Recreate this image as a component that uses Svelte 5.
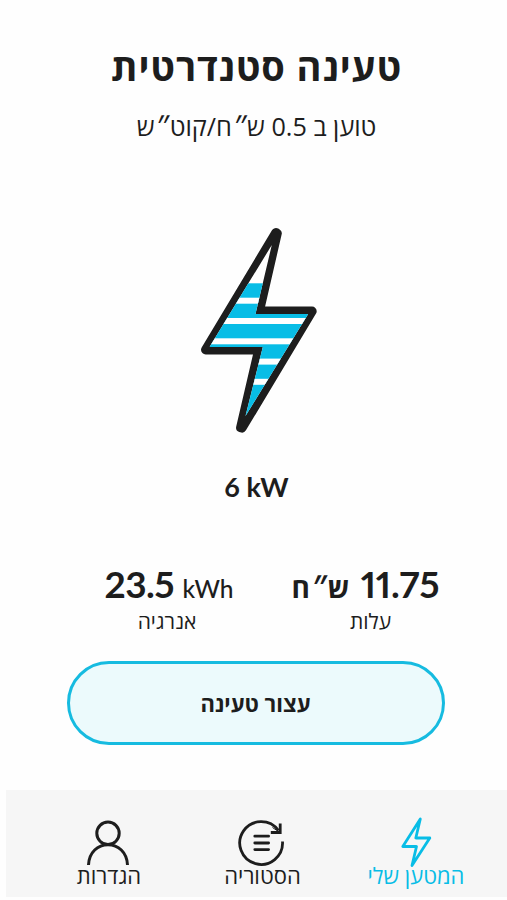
<script lang="ts">
  const rate = 0.5;
  const power = 6;
  const energy = 23.5;
  const cost = 11.75;

  // y positions of the gaps in the charge fill
  const gaps = [82.7, 103, 123.3, 143.6, 163.8];
  const outline = "M75.5 17.7 L76.6 18.3 L58.7 96.2 H111.5 L41.4 212.9 L40.3 212.5 L58.4 134.8 H5.2 Z";
  const inside = "M71.3 30 L55 99 H107.7 L45 201 L62.3 132 H9 Z";
</script>

<div class="screen" dir="rtl">
  <h1>טעינה סטנדרטית</h1>
  <p class="rate">טוען ב {rate} ש<i>״</i>ח/קוט<i>״</i>ש</p>

  <svg class="bolt" width="120" height="220" viewBox="0 0 120 220">
    <defs>
      <clipPath id="bolt-inside">
        <path d={inside} />
      </clipPath>
    </defs>
    <path d={outline} fill="#1d1d1d" stroke="#1d1d1d" stroke-width="9.4" stroke-linejoin="round" />
    <g clip-path="url(#bolt-inside)">
      <rect width="120" height="220" fill="#fff" />
      <rect y="68.3" width="120" height="150" fill="#08bde6" />
      {#each gaps as y}
        <rect {y} width="120" height="6" fill="#fff" />
      {/each}
    </g>
  </svg>

  <div class="power" dir="ltr">{power} kW</div>

  <div class="stats">
    <div class="stat cost">
      <div class="value"><b>{cost}</b><span class="currency">ש<i>״</i>ח</span></div>
      <div class="label">עלות</div>
    </div>
    <div class="stat energy">
      <div class="value" dir="ltr"><b>{energy}</b><span class="unit">kWh</span></div>
      <div class="label">אנרגיה</div>
    </div>
  </div>

  <button>עצור טעינה</button>

  <nav>
    <div class="tab active">
      <svg width="50" height="50" viewBox="0 0 50 50" fill="none" stroke="currentColor" stroke-width="2.8" stroke-linejoin="round">
        <path d="M29.3 5 L24.8 24 H38.8 L21 51.5 L25.5 32.5 H11.8 Z" />
      </svg>
      <span>המטען שלי</span>
    </div>
    <div class="tab history">
      <svg width="50" height="50" viewBox="0 0 50 50" fill="none" stroke="currentColor" stroke-width="2.8">
        <path d="M44.5 27.5 A21.4 21.4 0 1 1 40.5 16.5" />
        <path d="M42.2 9.5 V18.5 H32.8" />
        <path d="M34.5 13.5 L42 18.5" stroke-width="1" />
        <path d="M16.8 22.2 H30.6 M16.8 29 H30.6 M16.8 35.6 H30.6" stroke-linecap="round" />
      </svg>
      <span>הסטוריה</span>
    </div>
    <div class="tab settings">
      <svg width="50" height="50" viewBox="0 0 50 50" fill="none" stroke="currentColor" stroke-width="3">
        <circle cx="24" cy="19.3" r="11.2" />
        <path d="M4.5 51 C5 38 14 30.7 24 30.7 S43 38 43.5 51" />
      </svg>
      <span>הגדרות</span>
    </div>
  </nav>
</div>

<style>
  :global(body) {
    background: #fefefe;
  }
  .screen {
    display: flex;
    flex-direction: column;
    align-items: center;
    box-sizing: border-box;
    width: 507px;
    height: 900px;
    padding: 39px 0 3px 6px;
    color: #1d1d1d;
    font-family: "Open Sans", "Noto Sans", "DejaVu Sans", sans-serif;
    white-space: nowrap;
    overflow: hidden;
  }
  h1 {
    height: 56px;
    margin: 0;
    font-size: 38px;
    font-weight: 700;
    letter-spacing: 0.9px;
    line-height: 54px;
  }
  i {
    font-family: "Liberation Sans", sans-serif;
    line-height: 1;
  }
  .rate {
    height: 40px;
    margin: 11px 0 0;
    font-size: 25.2px;
    line-height: 40px;
  }
  .bolt {
    flex: none;
    margin: 69px 0 0;
    transform: translateX(3.5px);
  }
  .power {
    height: 40px;
    margin-top: 32px;
    font-family: Lato, sans-serif;
    font-size: 27px;
    font-weight: 700;
    line-height: 40px;
  }
  .stats {
    display: flex;
    gap: 58px;
    height: 76px;
    margin: 55px -31px 0 0;
  }
  .stat {
    text-align: center;
  }
  .value {
    display: flex;
    align-items: baseline;
    justify-content: space-between;
    height: 45px;
    line-height: 44px;
  }
  .value b {
    font-family: Lato, sans-serif;
    font-size: 37px;
    font-weight: 700;
    font-feature-settings: "pnum";
  }
  .cost {
    width: 148px;
  }
  .cost .label {
    padding-left: 10px;
  }
  .cost b {
    letter-spacing: -0.1px;
  }
  .energy {
    width: 129px;
  }
  .energy b {
    letter-spacing: -0.5px;
  }
  .energy .label {
    padding-right: 4px;
  }
  .cost .label {
    padding: 0 0 0 0;
    margin-right: -10px;
  }
  .currency {
    font-size: 28px;
    font-weight: 700;
  }
  .unit {
    font-family: Lato, sans-serif;
    font-size: 24.5px;
    font-weight: 500;
  }
  .label {
    font-size: 21px;
    line-height: 28px;
  }
  button {
    flex: none;
    width: 378px;
    height: 84px;
    margin: 23px 2px 0 0;
    padding: 0;
    border: 3px solid #16bbe0;
    border-radius: 42px;
    background: #ecfafc;
    color: #1d1d1d;
    font-family: inherit;
    font-size: 22px;
    font-weight: 700;
  }
  nav {
    display: flex;
    justify-content: space-between;
    box-sizing: border-box;
    width: 501px;
    height: 107px;
    margin-top: auto;
    padding: 24px 38px 0 50px;
    background: #f6f6f6;
  }
  .tab {
    display: flex;
    flex-direction: column;
    align-items: center;
    width: 106px;
    font-size: 22px;
    line-height: 23px;
  }
  .tab svg {
    flex: none;
    overflow: visible;
  }
  .active {
    color: #08bde6;
  }
</style>
